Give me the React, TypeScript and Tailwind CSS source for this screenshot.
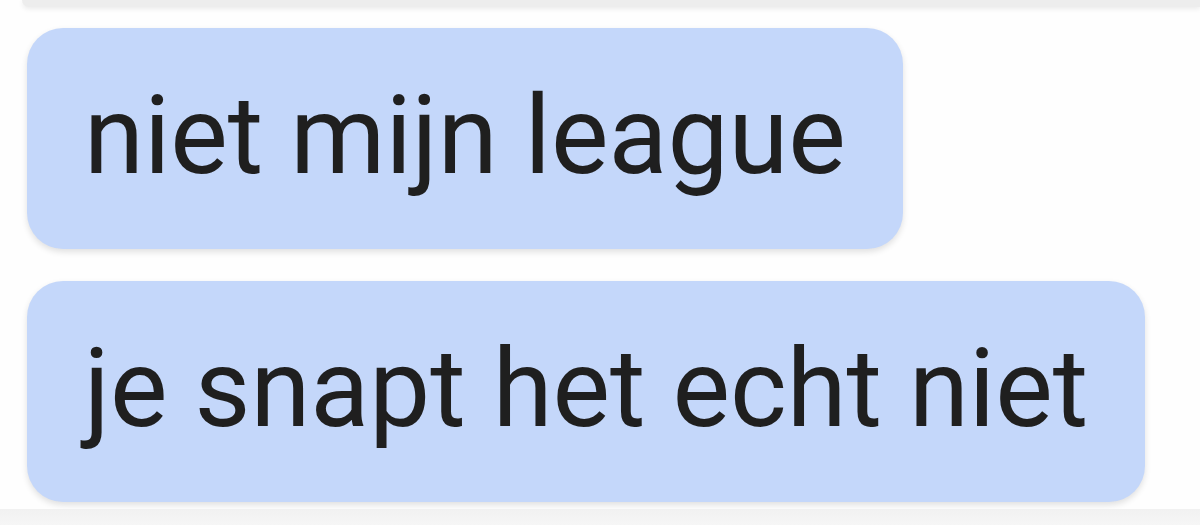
const messages = ["niet mijn league", "je snapt het echt niet"];

export default function App() {
  return (
    <div className="w-[1200px] h-[525px] overflow-hidden bg-[#fefefe] flex flex-col font-['Roboto',sans-serif]">
      <div className="h-[7px] ml-[22px] bg-[#ededed] rounded-bl-[30px] shadow-[0_2px_5px_rgba(0,0,0,0.08)]" />
      <div className="flex flex-col items-start gap-[32px] pl-[27px] pt-[21px]">
        {messages.map((m) => (
          <div
            key={m}
            className="h-[221px] flex items-center px-[57px] rounded-[36px] bg-[#c4d7fa] shadow-[0_3px_6px_rgba(0,0,0,0.12)]"
          >
            <span className="text-[108.5px] leading-none text-[#1f1f1f] pb-[4px]">{m}</span>
          </div>
        ))}
      </div>
      <div className="mt-auto h-[16px] bg-gradient-to-b from-[#f1f1f1] to-[#f6f6f6]" />
    </div>
  );
}
